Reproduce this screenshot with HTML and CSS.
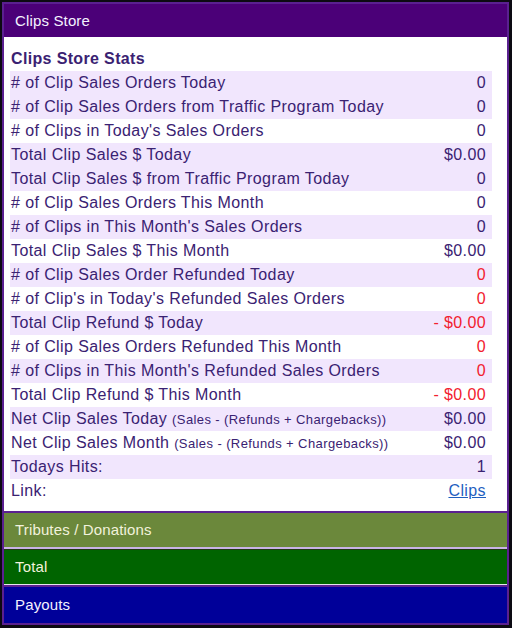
FILE: index.html
```html
<!DOCTYPE html>
<html>
<head>
<meta charset="utf-8">
<link rel="stylesheet" href="styles.css">
</head>
<body>
<div class="panel">
  <div class="sec sec-clips">Clips Store</div>
  <div class="content">
    <div class="title">Clips Store Stats</div>
    <div class="row alt"><span># of Clip Sales Orders Today</span><span>0</span></div>
    <div class="row alt"><span># of Clip Sales Orders from Traffic Program Today</span><span>0</span></div>
    <div class="row"><span># of Clips in Today's Sales Orders</span><span>0</span></div>
    <div class="row alt"><span>Total Clip Sales $ Today</span><span>$0.00</span></div>
    <div class="row alt"><span>Total Clip Sales $ from Traffic Program Today</span><span>0</span></div>
    <div class="row"><span># of Clip Sales Orders This Month</span><span>0</span></div>
    <div class="row alt"><span># of Clips in This Month's Sales Orders</span><span>0</span></div>
    <div class="row"><span>Total Clip Sales $ This Month</span><span>$0.00</span></div>
    <div class="row alt"><span># of Clip Sales Order Refunded Today</span><span class="neg">0</span></div>
    <div class="row"><span># of Clip's in Today's Refunded Sales Orders</span><span class="neg">0</span></div>
    <div class="row alt"><span>Total Clip Refund $ Today</span><span class="neg">- $0.00</span></div>
    <div class="row"><span># of Clip Sales Orders Refunded This Month</span><span class="neg">0</span></div>
    <div class="row alt"><span># of Clips in This Month's Refunded Sales Orders</span><span class="neg">0</span></div>
    <div class="row"><span>Total Clip Refund $ This Month</span><span class="neg">- $0.00</span></div>
    <div class="row alt"><span>Net Clip Sales Today <small>(Sales - (Refunds + Chargebacks))</small></span><span>$0.00</span></div>
    <div class="row"><span>Net Clip Sales Month <small>(Sales - (Refunds + Chargebacks))</small></span><span>$0.00</span></div>
    <div class="row alt"><span>Todays Hits:</span><span>1</span></div>
    <div class="row"><span>Link:</span><a href="#" class="link">Clips</a></div>
  </div>
  <div class="sec sec-tributes">Tributes / Donations</div>
  <div class="sec sec-total">Total</div>
  <div class="sec sec-payouts">Payouts</div>
</div>
</body>
</html>
```

FILE: styles.css
```css
html, body {
  margin: 0;
  padding: 0;
  background: #0c0a12;
}
body {
  padding: 2px 3px 2px 2px;
  font-family: "Liberation Sans", Arial, sans-serif;
}
.panel {
  border: 2px solid #5a2090;
  background: #ffffff;
  display: flex;
  flex-direction: column;
}
.sec {
  height: 34px;
  line-height: 34px;
  padding-left: 11px;
  font-size: 15px;
  letter-spacing: 0.15px;
  color: #f4f2ff;
}
.sec-clips {
  height: 33px;
  line-height: 33px;
  background: #4b0078;
}
.sec-tributes {
  border-top: 2px solid #5a2090;
  background: #6b883b;
  color: #f2f2dc;
  border-bottom: 2px solid #c9b3e6;
}
.sec-total {
  border-top: 1px solid #1e3a10;
  background: #006400;
  color: #f2f2dc;
  border-bottom: 1px solid #e8e4ee;
}
.sec-payouts {
  border-top: 2px solid #5a2090;
  background: #000099;
  height: 36px;
  line-height: 35px;
}
.content {
  padding: 10px 15px 8px 6px;
  color: #3a2272;
}
.title {
  font-weight: bold;
  font-size: 16px;
  letter-spacing: 0.35px;
  height: 24px;
  line-height: 23px;
  padding-left: 1px;
}
.row {
  display: flex;
  justify-content: space-between;
  align-items: center;
  height: 24px;
  font-size: 16px;
  letter-spacing: 0.4px;
  padding: 0 6px 0 1px;
  white-space: nowrap;
}
.row.alt {
  background: #f1e6fd;
}
.row small {
  font-size: 13px;
}
.neg {
  color: #f2202e;
}
.link {
  color: #1f5fbf;
  text-decoration: underline;
}
```
